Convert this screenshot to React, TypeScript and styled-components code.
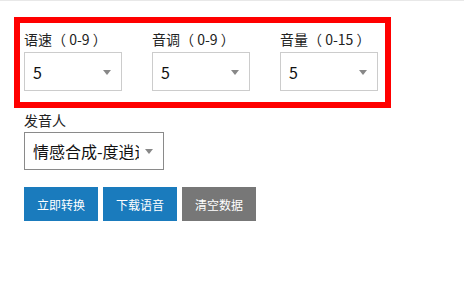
import React from 'react';
import styled, { createGlobalStyle } from 'styled-components';

const GlobalStyle = createGlobalStyle`
    html, body {
        margin: 0;
        padding: 0;
        background: #ffffff;
    }
    body {
        font-family: "Noto Sans CJK SC", "Microsoft YaHei", sans-serif;
        color: #222222;
    }
`

const Page = styled.div`
    width: 464px;
    height: 284px;
    box-sizing: border-box;
    border-top: 1px solid #e8e8e8;
    padding-top: 16px;
`

const Highlight = styled.div`
    margin-left: 14px;
    width: 377px;
    height: 91px;
    box-sizing: border-box;
    border: 6px solid #ff0000;
    padding: 6px 0 0 4px;
    display: flex;
    gap: 30px;
`

const Field = styled.div`
    display: flex;
    flex-direction: column;
`

const Label = styled.div`
    font-size: 14px;
    line-height: 20px;
    height: 20px;
    margin-bottom: 3px;
    color: #222222;
    white-space: pre;
`

const SelectBox = styled.div<{ $width: number; $height: number; $dark?: boolean }>`
    position: relative;
    width: ${p => p.$width}px;
    height: ${p => p.$height}px;
    box-sizing: border-box;
    border: 1px solid ${p => (p.$dark ? '#8a8a8a' : '#cccccc')};
    background: #ffffff;
    display: flex;
    align-items: center;
    padding: 0 24px 0 8px;
    overflow: hidden;
`

const Value = styled.span<{ $clip?: boolean }>`
    font-size: 16px;
    line-height: 26px;
    color: #111111;
    white-space: nowrap;
    overflow: ${p => (p.$clip ? 'hidden' : 'visible')};
`

const Arrow = styled.span`
    position: absolute;
    right: 10px;
    top: 50%;
    margin-top: -2px;
    width: 0;
    height: 0;
    border-left: 4px solid transparent;
    border-right: 4px solid transparent;
    border-top: 5px solid #888888;
`

const Section = styled.div`
    margin-left: 24px;
`

const SpeakerLabel = styled(Label)`
    margin-top: 2px;
    margin-bottom: 2px;
`

const ButtonRow = styled.div`
    display: flex;
    gap: 5px;
    margin-top: 17px;
`

const Button = styled.button<{ $tone: 'primary' | 'muted' }>`
    width: 74px;
    height: 34px;
    border: none;
    padding: 0;
    font-family: "Noto Sans CJK SC", "Microsoft YaHei", sans-serif;
    font-size: 12px;
    color: #ffffff;
    background: ${p => (p.$tone === 'primary' ? '#1a7bbd' : '#777777')};
    cursor: pointer;
`

const params = [
    { label: '语速（ 0-9 ）', value: '5' },
    { label: '音调（ 0-9 ）', value: '5' },
    { label: '音量（ 0-15 ）', value: '5' },
];

const App = () => {
    return (
        <Page>
            <GlobalStyle />
            <Highlight>
                {params.map(p => (
                    <Field key={p.label}>
                        <Label>{p.label}</Label>
                        <SelectBox $width={98} $height={39}>
                            <Value>{p.value}</Value>
                            <Arrow />
                        </SelectBox>
                    </Field>
                ))}
            </Highlight>
            <Section>
                <SpeakerLabel>发音人</SpeakerLabel>
                <SelectBox $width={140} $height={38} $dark>
                    <Value $clip>情感合成-度逍遥</Value>
                    <Arrow />
                </SelectBox>
                <ButtonRow>
                    <Button $tone="primary">立即转换</Button>
                    <Button $tone="primary">下载语音</Button>
                    <Button $tone="muted">清空数据</Button>
                </ButtonRow>
            </Section>
        </Page>
    )
}

export default App
